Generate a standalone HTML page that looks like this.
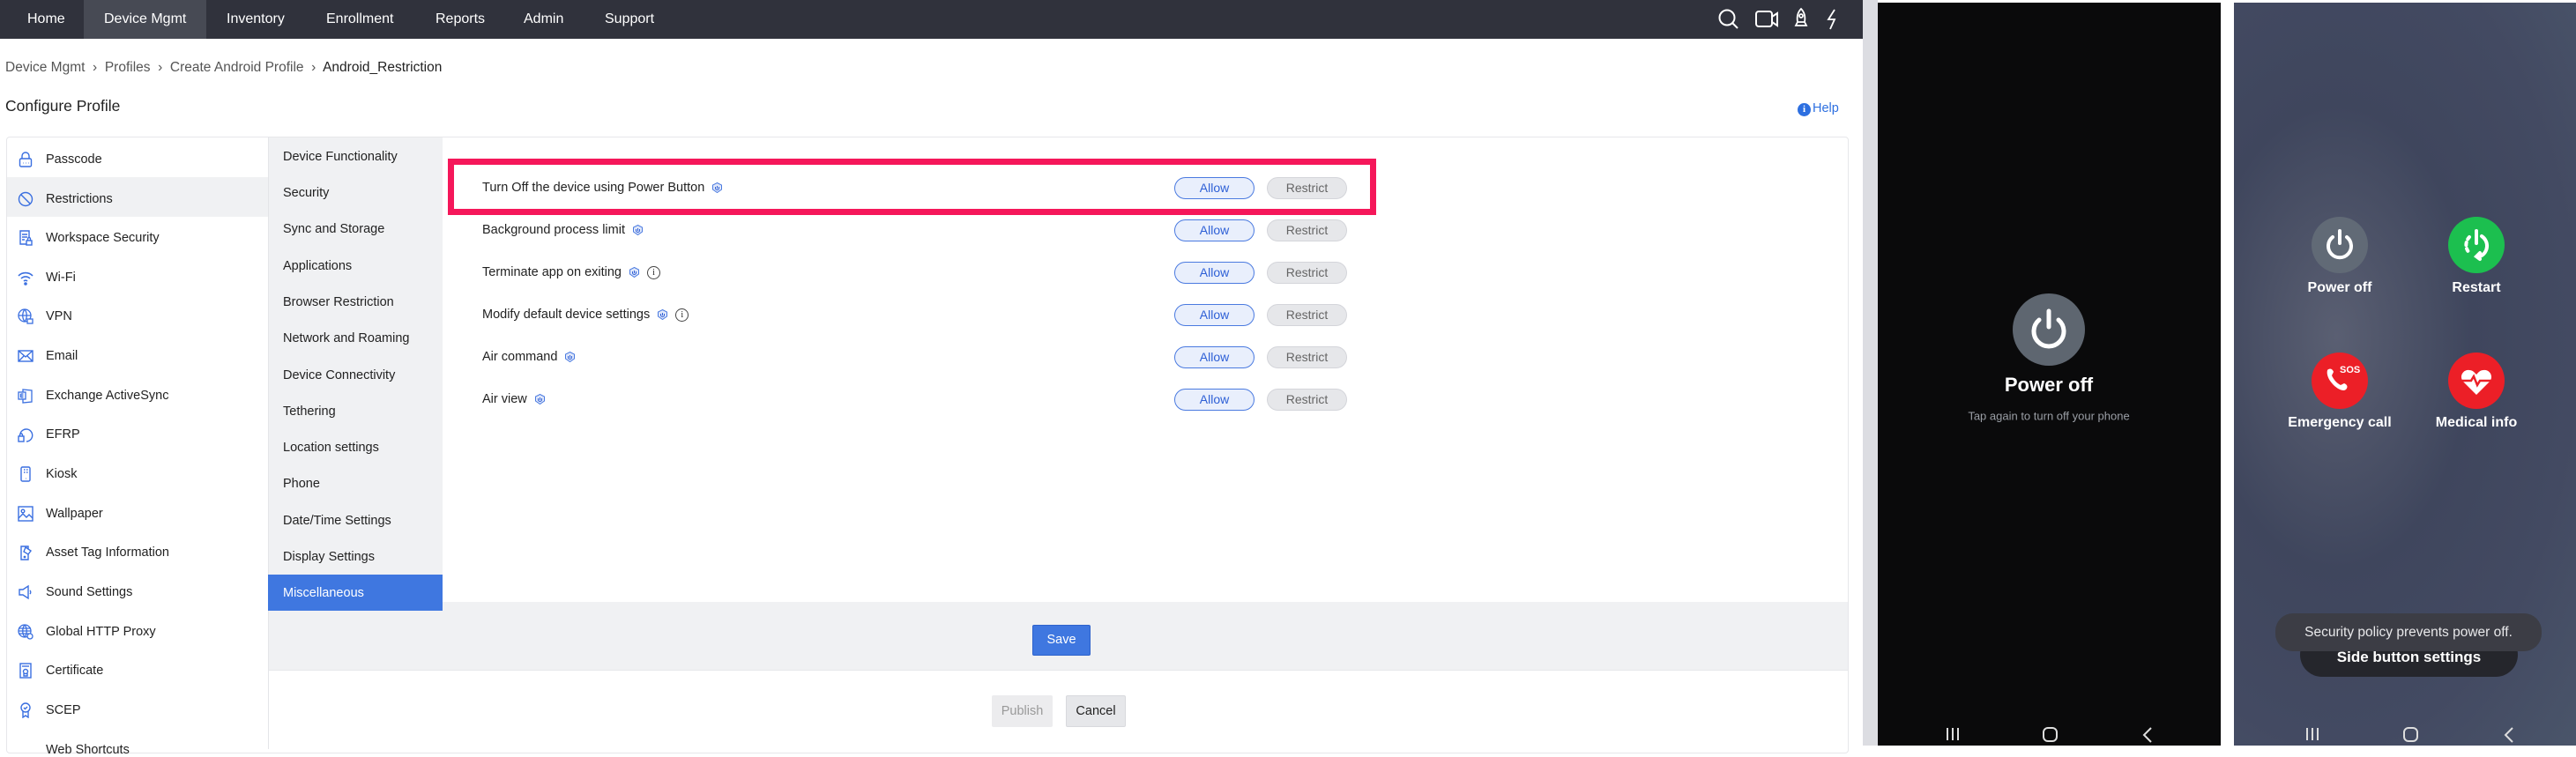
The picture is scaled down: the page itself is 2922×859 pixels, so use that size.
<!DOCTYPE html>
<html><head><meta charset="utf-8"><style>
*{margin:0;padding:0;box-sizing:border-box}
body{width:2922px;height:846px;overflow:hidden;background:#fff;font-family:"Liberation Sans",sans-serif;position:relative;color:#222}
.a{position:absolute}
.nav{left:0;top:0;width:2113px;height:44px;background:#30323c}
.nav span{position:absolute;top:0;line-height:44px;color:#fff;font-size:16px}
.crumb{top:68px;left:6px;font-size:15.5px;color:#555}
.crumb b{font-weight:normal;color:#222}
.li{position:absolute;left:52px;font-size:14.5px;color:#222;transform:translateY(-50%)}
.ic{position:absolute;left:20px;width:18px;height:18px;transform:translateY(-50%)}
.mi{position:absolute;left:321px;font-size:14.5px;color:#222;transform:translateY(-50%)}
.rl{position:absolute;left:547px;font-size:14.5px;color:#222;transform:translateY(-50%);white-space:nowrap}
.sh{display:inline-block;width:11px;height:12px;vertical-align:middle;margin-left:9px}
.inf{display:inline-block;width:15px;height:15px;border:1.3px solid #444;border-radius:50%;vertical-align:middle;margin-left:9px;font-size:10px;text-align:center;line-height:13px;font-family:"Liberation Serif",serif}
.al{position:absolute;left:1332px;width:91px;height:25px;border:1.5px solid #4a7ae0;background:#e9effc;border-radius:13px;color:#2d5fd6;font-size:14px;text-align:center;line-height:22px}
.rs{position:absolute;left:1437px;width:91px;height:25px;border:1.5px solid #d4d5da;background:#e6e7ea;border-radius:13px;color:#666;font-size:14px;text-align:center;line-height:22px}
.pl{color:#fff;font-size:16px;font-weight:bold;text-align:center;width:200px;transform:translate(-50%,-50%)}
</style></head><body>
<div class="a nav">
<div class="a" style="left:95px;top:0;width:139px;height:44px;background:#474a54"></div>
<span style="left:31px">Home</span><span style="left:118px">Device Mgmt</span><span style="left:257px">Inventory</span><span style="left:370px">Enrollment</span><span style="left:494px">Reports</span><span style="left:594px">Admin</span><span style="left:686px">Support</span>
<svg class="a" style="left:1948px;top:9px" width="26" height="26" viewBox="0 0 26 26" fill="none" stroke="#fff" stroke-width="2"><circle cx="11" cy="11" r="8.5"/><path d="M17 17l6 6"/></svg>
<svg class="a" style="left:1991px;top:11px" width="28" height="22" viewBox="0 0 28 22" fill="none" stroke="#fff" stroke-width="2"><rect x="1" y="2" width="18" height="17" rx="3"/><path d="M19 8l6-4v14l-6-4"/></svg>
<svg class="a" style="left:2034px;top:8px" width="18" height="26" viewBox="0 0 18 26" fill="none" stroke="#fff" stroke-width="1.8"><path d="M9 2c4 4 5 9 4 15H5C4 11 5 6 9 2z"/><circle cx="9" cy="10" r="2"/><path d="M5 17l-2 4h12l-2-4"/></svg>
<svg class="a" style="left:2070px;top:9px" width="16" height="26" viewBox="0 0 16 26" fill="none" stroke="#fff" stroke-width="1.8"><path d="M11 2L4 13h7l-5 11"/></svg>
</div>
<div class="a" style="left:2113px;top:0;width:17px;height:846px;background:#dcdde2"></div>
<div class="a crumb">Device Mgmt &nbsp;&#x203A;&nbsp; Profiles &nbsp;&#x203A;&nbsp; Create Android Profile &nbsp;&#x203A;&nbsp; <b>Android_Restriction</b></div>
<div class="a" style="left:6px;top:110px;font-size:17.5px;color:#222">Configure Profile</div>
<div class="a" style="left:2039px;top:117px;width:15px;height:15px;border-radius:50%;background:#2d6fe0;color:#fff;font-size:11px;text-align:center;line-height:15px;font-weight:bold;font-family:'Liberation Serif',serif">i</div>
<div class="a" style="left:2056px;top:115px;font-size:14.5px;color:#2d6fe0">Help</div>
<!-- panel -->
<div class="a" style="left:7px;top:155px;width:2090px;height:700px;border:1.5px solid #e6e7ea;border-radius:4px"></div>
<div class="a" style="left:304px;top:156px;width:198px;height:604px;background:#f0f1f3;border-left:1px solid #e4e5e8"></div>
<div class="a" style="left:304px;top:760px;width:1px;height:90px;background:#e4e5e8"></div>
<div class="a" style="left:8px;top:201px;width:296px;height:45px;background:#f0f1f3"></div>
<div class="a" style="left:304px;top:652px;width:198px;height:41px;background:#3f77e0"></div>
<div class="a" style="left:502px;top:683px;width:1594px;height:77px;background:#f0f1f3"></div>
<div class="a" style="left:304px;top:760px;width:1792px;height:1px;background:#e6e7ea"></div>
<div class="a" style="left:1171px;top:709px;width:66px;height:35px;background:#3f77e0;border:1px solid #2d62cc;border-radius:2px;color:#fff;font-size:14.5px;text-align:center;line-height:33px">Save</div>
<div class="a" style="left:1125px;top:789px;width:69px;height:36px;background:#ececee;border-radius:2px;color:#999;font-size:14.5px;text-align:center;line-height:36px">Publish</div>
<div class="a" style="left:1209px;top:789px;width:68px;height:36px;background:#e6e7ea;border:1px solid #d8d9dd;border-radius:2px;color:#222;font-size:14.5px;text-align:center;line-height:34px">Cancel</div>
<!-- left items -->
<svg class="ic" style="top:181px" viewBox="0 0 18 18" fill="none" stroke="#3a6fe0" stroke-width="1.4"><path d="M5 8V5a4 4 0 018 0v3"/><rect x="2.5" y="8" width="13" height="9" rx="1.5"/><path d="M6 13h.5M9 13h.5M12 13h.5"/></svg>
<svg class="ic" style="top:226px" viewBox="0 0 18 18" fill="none" stroke="#3a6fe0" stroke-width="1.4"><circle cx="9" cy="9" r="7.5"/><path d="M4 4l10 10"/></svg>
<svg class="ic" style="top:270px" viewBox="0 0 18 18" fill="none" stroke="#3a6fe0" stroke-width="1.4"><path d="M10 16H3V1h10v7"/><path d="M5 5h6M5 8h6M5 11h3"/><rect x="10" y="12" width="6" height="5"/><path d="M11.5 12v-2a1.5 1.5 0 013 0v2"/></svg>
<svg class="ic" style="top:315px" viewBox="0 0 18 18" fill="none" stroke="#3a6fe0" stroke-width="1.6"><path d="M1 7a11 11 0 0116 0M4 10a7 7 0 0110 0M7 13a3 3 0 014 0"/><circle cx="9" cy="16" r="1" fill="#3a6fe0"/></svg>
<svg class="ic" style="top:359px" viewBox="0 0 18 18" fill="none" stroke="#3a6fe0" stroke-width="1.3"><circle cx="8" cy="8" r="7"/><path d="M1 8h14M8 1c-3 4-3 10 0 14M8 1c3 4 3 10 0 14"/><rect x="11" y="12" width="6" height="5" fill="#fff"/></svg>
<svg class="ic" style="top:404px" viewBox="0 0 18 18" fill="none" stroke="#3a6fe0" stroke-width="1.4"><rect x="1" y="3" width="16" height="12"/><path d="M1 3l8 7 8-7M1 15l6-6M17 15l-6-6"/></svg>
<svg class="ic" style="top:449px" viewBox="0 0 18 18" fill="none" stroke="#3a6fe0" stroke-width="1.3"><path d="M6 2l10 1v13l-10 1z"/><rect x="1" y="5" width="8" height="8" fill="#fff"/><path d="M3.5 7h3M3.5 9h3M3.5 11h3M3.5 7v4"/></svg>
<svg class="ic" style="top:493px" viewBox="0 0 18 18" fill="none" stroke="#3a6fe0" stroke-width="1.4"><path d="M3 8a7 7 0 117 9"/><rect x="1" y="11" width="6" height="6"/><path d="M2.5 11V9.5a1.5 1.5 0 013 0V11"/></svg>
<svg class="ic" style="top:538px" viewBox="0 0 18 18" fill="none" stroke="#3a6fe0" stroke-width="1.4"><rect x="4" y="1" width="10" height="16" rx="1.5"/><path d="M7 4h1.5M10 4h1.5M7 7h1.5M10 7h1.5M9 14h.5"/></svg>
<svg class="ic" style="top:583px" viewBox="0 0 18 18" fill="none" stroke="#3a6fe0" stroke-width="1.4"><rect x="1" y="1" width="16" height="16"/><circle cx="6" cy="6" r="1.8"/><path d="M1 14l5-5 4 4 3-3 4 4"/></svg>
<svg class="ic" style="top:627px" viewBox="0 0 18 18" fill="none" stroke="#3a6fe0" stroke-width="1.4"><path d="M4 2h8v15H4z"/><path d="M9 3l6 4-3 4-5-3z" fill="#fff"/><circle cx="8" cy="14" r=".7"/></svg>
<svg class="ic" style="top:672px" viewBox="0 0 18 18" fill="none" stroke="#3a6fe0" stroke-width="1.4"><path d="M2 6h4l6-4v14l-6-4H2z"/><path d="M14 7a3 3 0 010 4"/></svg>
<svg class="ic" style="top:717px" viewBox="0 0 18 18" fill="none" stroke="#3a6fe0" stroke-width="1.3"><circle cx="8" cy="8" r="7"/><path d="M1 8h14M8 1c-3 4-3 10 0 14M8 1c3 4 3 10 0 14M1 5h14M1 11h14"/><circle cx="14" cy="14" r="3" fill="#fff"/></svg>
<svg class="ic" style="top:761px" viewBox="0 0 18 18" fill="none" stroke="#3a6fe0" stroke-width="1.4"><rect x="3" y="1" width="12" height="16"/><path d="M5 4h8"/><circle cx="9" cy="10" r="2.5"/><path d="M7 12v3h4v-3"/></svg>
<svg class="ic" style="top:806px" viewBox="0 0 18 18" fill="none" stroke="#3a6fe0" stroke-width="1.4"><circle cx="9" cy="6" r="5"/><path d="M7 6l1.5 1.5L11 5M6 10v7l3-2 3 2v-7"/></svg>
<div class="li" style="top:181px">Passcode</div>
<div class="li" style="top:226px">Restrictions</div>
<div class="li" style="top:270px">Workspace Security</div>
<div class="li" style="top:315px">Wi-Fi</div>
<div class="li" style="top:359px">VPN</div>
<div class="li" style="top:404px">Email</div>
<div class="li" style="top:449px">Exchange ActiveSync</div>
<div class="li" style="top:493px">EFRP</div>
<div class="li" style="top:538px">Kiosk</div>
<div class="li" style="top:583px">Wallpaper</div>
<div class="li" style="top:627px">Asset Tag Information</div>
<div class="li" style="top:672px">Sound Settings</div>
<div class="li" style="top:717px">Global HTTP Proxy</div>
<div class="li" style="top:761px">Certificate</div>
<div class="li" style="top:806px">SCEP</div>
<div class="li" style="top:851px">Web Shortcuts</div>
<!-- middle -->
<div class="mi" style="top:178px">Device Functionality</div>
<div class="mi" style="top:219px">Security</div>
<div class="mi" style="top:260px">Sync and Storage</div>
<div class="mi" style="top:302px">Applications</div>
<div class="mi" style="top:343px">Browser Restriction</div>
<div class="mi" style="top:384px">Network and Roaming</div>
<div class="mi" style="top:426px">Device Connectivity</div>
<div class="mi" style="top:467px">Tethering</div>
<div class="mi" style="top:508px">Location settings</div>
<div class="mi" style="top:549px">Phone</div>
<div class="mi" style="top:591px">Date/Time Settings</div>
<div class="mi" style="top:632px">Display Settings</div>
<div class="mi" style="top:673px;color:#fff">Miscellaneous</div>
<!-- rows -->
<div class="a" style="left:508px;top:180px;width:1053px;height:64px;border:7px solid #f5175a"></div>
<svg width="0" height="0" style="position:absolute"><defs><g id="sh"><path d="M5.5 0.5L10.5 3v5L5.5 11.5 0.5 8V3z" fill="#dfe7fa" stroke="#4a7ae0" stroke-width="1"/><path d="M3.5 5v1.5a2 2 0 004 0V5M5.5 4v3" fill="none" stroke="#2d5fd6" stroke-width="1"/></g></defs></svg>
<div class="rl" style="top:213px">Turn Off the device using Power Button<svg class="sh" viewBox="0 0 11 12"><use href="#sh"/></svg></div>
<div class="rl" style="top:261px">Background process limit<svg class="sh" viewBox="0 0 11 12"><use href="#sh"/></svg></div>
<div class="rl" style="top:309px">Terminate app on exiting<svg class="sh" viewBox="0 0 11 12"><use href="#sh"/></svg><span class="inf">i</span></div>
<div class="rl" style="top:357px">Modify default device settings<svg class="sh" viewBox="0 0 11 12"><use href="#sh"/></svg><span class="inf">i</span></div>
<div class="rl" style="top:405px">Air command<svg class="sh" viewBox="0 0 11 12"><use href="#sh"/></svg></div>
<div class="rl" style="top:453px">Air view<svg class="sh" viewBox="0 0 11 12"><use href="#sh"/></svg></div>
<div class="al" style="top:201px">Allow</div><div class="rs" style="top:201px">Restrict</div>
<div class="al" style="top:249px">Allow</div><div class="rs" style="top:249px">Restrict</div>
<div class="al" style="top:297px">Allow</div><div class="rs" style="top:297px">Restrict</div>
<div class="al" style="top:345px">Allow</div><div class="rs" style="top:345px">Restrict</div>
<div class="al" style="top:393px">Allow</div><div class="rs" style="top:393px">Restrict</div>
<div class="al" style="top:441px">Allow</div><div class="rs" style="top:441px">Restrict</div>
<!-- phone 1 -->
<div class="a" style="left:2130px;top:3px;width:389px;height:843px;background:#0a0a0b"></div>
<div class="a" style="left:2283px;top:333px;width:82px;height:82px;border-radius:50%;background:#5e6670"></div>
<svg class="a" style="left:2294px;top:344px" width="60" height="60" viewBox="0 0 60 60" fill="none" stroke="#fff" stroke-width="5" stroke-linecap="round"><path d="M19 19a17 17 0 1022 0"/><path d="M30 9v18"/></svg>
<div class="a" style="left:2324px;top:437px;color:#fff;font-size:22px;font-weight:bold;transform:translate(-50%,-50%);white-space:nowrap">Power off</div>
<div class="a" style="left:2324px;top:472px;color:#9a9ea5;font-size:13px;transform:translate(-50%,-50%);white-space:nowrap">Tap again to turn off your phone</div>
<div class="a" style="left:2208px;top:826px;width:14px;height:14px;border-left:2px solid #ddd;border-right:2px solid #ddd"><div style="margin-left:4px;width:2px;height:14px;background:#ddd"></div></div>
<div class="a" style="left:2317px;top:825px;width:17px;height:17px;border:2px solid #ddd;border-radius:6px"></div>
<svg class="a" style="left:2430px;top:824px" width="12" height="20" viewBox="0 0 12 20" fill="none" stroke="#ddd" stroke-width="2"><path d="M10 2L2 10l8 8"/></svg>
<!-- phone 2 -->
<div class="a" style="left:2534px;top:3px;width:388px;height:843px;background:radial-gradient(ellipse at 30% 45%,#5a5f72 0%,#3f465d 40%,#434a62 70%,#4a556a 100%)"></div>
<div class="a" style="left:2622px;top:246px;width:64px;height:64px;border-radius:50%;background:#616a76"></div>
<svg class="a" style="left:2630px;top:254px" width="48" height="48" viewBox="0 0 48 48" fill="none" stroke="#fff" stroke-width="4" stroke-linecap="round"><path d="M16 15a13 13 0 1016 0"/><path d="M24 8v14"/></svg>
<div class="a" style="left:2777px;top:246px;width:64px;height:64px;border-radius:50%;background:#1cbf4f"></div>
<svg class="a" style="left:2785px;top:254px" width="48" height="48" viewBox="0 0 48 48" fill="none" stroke="#fff" stroke-width="4" stroke-linecap="round"><path d="M30 14a13 13 0 01-2 23" /><path d="M16 15a13 13 0 000 18" stroke-dasharray="3 4"/><path d="M24 8v14M28 33l-4 4 4 3"/></svg>
<div class="a" style="left:2622px;top:400px;width:64px;height:64px;border-radius:50%;background:#ec1f27"></div>
<svg class="a" style="left:2630px;top:408px" width="48" height="48" viewBox="0 0 48 48"><path d="M10 12c3-3 6-1 7 2l-2 4c2 5 6 9 10 11l4-2c3 1 5 4 2 7-6 5-24-11-21-22z" fill="#fff"/><text x="24" y="15" fill="#fff" font-size="11" font-weight="bold" font-family="Liberation Sans">SOS</text></svg>
<div class="a" style="left:2777px;top:400px;width:64px;height:64px;border-radius:50%;background:#ec1f27"></div>
<svg class="a" style="left:2785px;top:408px" width="48" height="48" viewBox="0 0 48 48"><path d="M24 40L9 25c-5-6 0-14 7-13 4 0 6 3 8 5 2-2 4-5 8-5 7-1 12 7 7 13z" fill="#fff"/><path d="M6 24h12l3-5 4 10 3-5h14" fill="none" stroke="#ec1f27" stroke-width="2.5"/></svg>
<div class="a pl" style="left:2654px;top:327px">Power off</div>
<div class="a pl" style="left:2809px;top:327px">Restart</div>
<div class="a pl" style="left:2654px;top:480px">Emergency call</div>
<div class="a pl" style="left:2809px;top:480px">Medical info</div>
<div class="a" style="left:2609px;top:718px;width:247px;height:50px;border-radius:25px;background:#25262c;color:#fff;font-size:17px;font-weight:bold;text-align:center;line-height:56px">Side button settings</div>
<div class="a" style="left:2581px;top:696px;width:302px;height:43px;border-radius:20px;background:#3c3d45;color:#e8e8ea;font-size:15.5px;text-align:center;line-height:43px">Security policy prevents power off.</div>
<div class="a" style="left:2616px;top:826px;width:14px;height:14px;border-left:2px solid #ddd;border-right:2px solid #ddd"><div style="margin-left:4px;width:2px;height:14px;background:#ddd"></div></div>
<div class="a" style="left:2726px;top:825px;width:17px;height:17px;border:2px solid #ddd;border-radius:6px"></div>
<svg class="a" style="left:2840px;top:824px" width="12" height="20" viewBox="0 0 12 20" fill="none" stroke="#ddd" stroke-width="2"><path d="M10 2L2 10l8 8"/></svg>
</body></html>
